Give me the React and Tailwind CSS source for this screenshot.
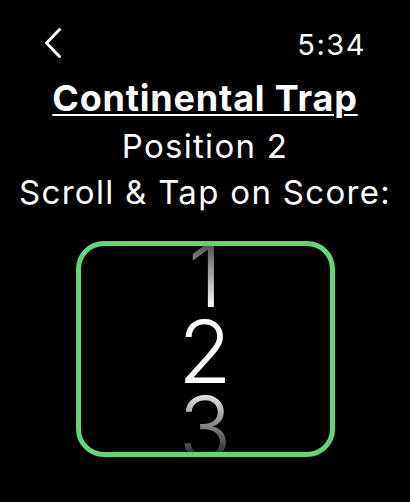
export default function App() {
  return (
    <div className="w-[410px] h-[502px] bg-black text-white overflow-hidden font-['Inter','Roboto',sans-serif]">
      {/* status bar */}
      <div className="flex items-start justify-between pt-[27px] pl-[44px] pr-[44px] h-[63px]">
        <svg width="18" height="30" viewBox="0 0 18 30" className="mt-[1px]" fill="none">
          <path d="M15.5 1.5 L2.5 15 L15.5 28.5" stroke="#fff" strokeWidth="3" strokeLinecap="round" strokeLinejoin="round" />
        </svg>
        <span className="text-[29px] leading-[36px] tracking-[1.5px]">5:34</span>
      </div>

      {/* headings */}
      <div className="mt-[12px] flex flex-col items-center text-center">
        <h1 className="text-[36px] leading-[46px] font-bold tracking-[0.8px] underline decoration-[1.5px] underline-offset-[3px]">
          Continental Trap
        </h1>
        <p className="mt-[2px] text-[33px] leading-[46px] tracking-[1.3px]">Position 2</p>
        <p className="text-[33px] leading-[46px] tracking-[1.3px] whitespace-nowrap">Scroll &amp; Tap on Score:</p>
      </div>

      {/* score picker */}
      <div className="mt-[26px] mx-auto w-[259px] h-[216px] border-[5px] border-[#62d57a] rounded-[28px] overflow-hidden">
        <div className="h-full pt-[5px] flex flex-col items-center justify-center font-light text-[87px] leading-[76px] [mask-image:linear-gradient(to_bottom,rgba(0,0,0,0.35)_0%,#000_30%,#000_68%,rgba(0,0,0,0.2)_100%)]">
          <span>1</span>
          <span>2</span>
          <span>3</span>
        </div>
      </div>
    </div>
  );
}
